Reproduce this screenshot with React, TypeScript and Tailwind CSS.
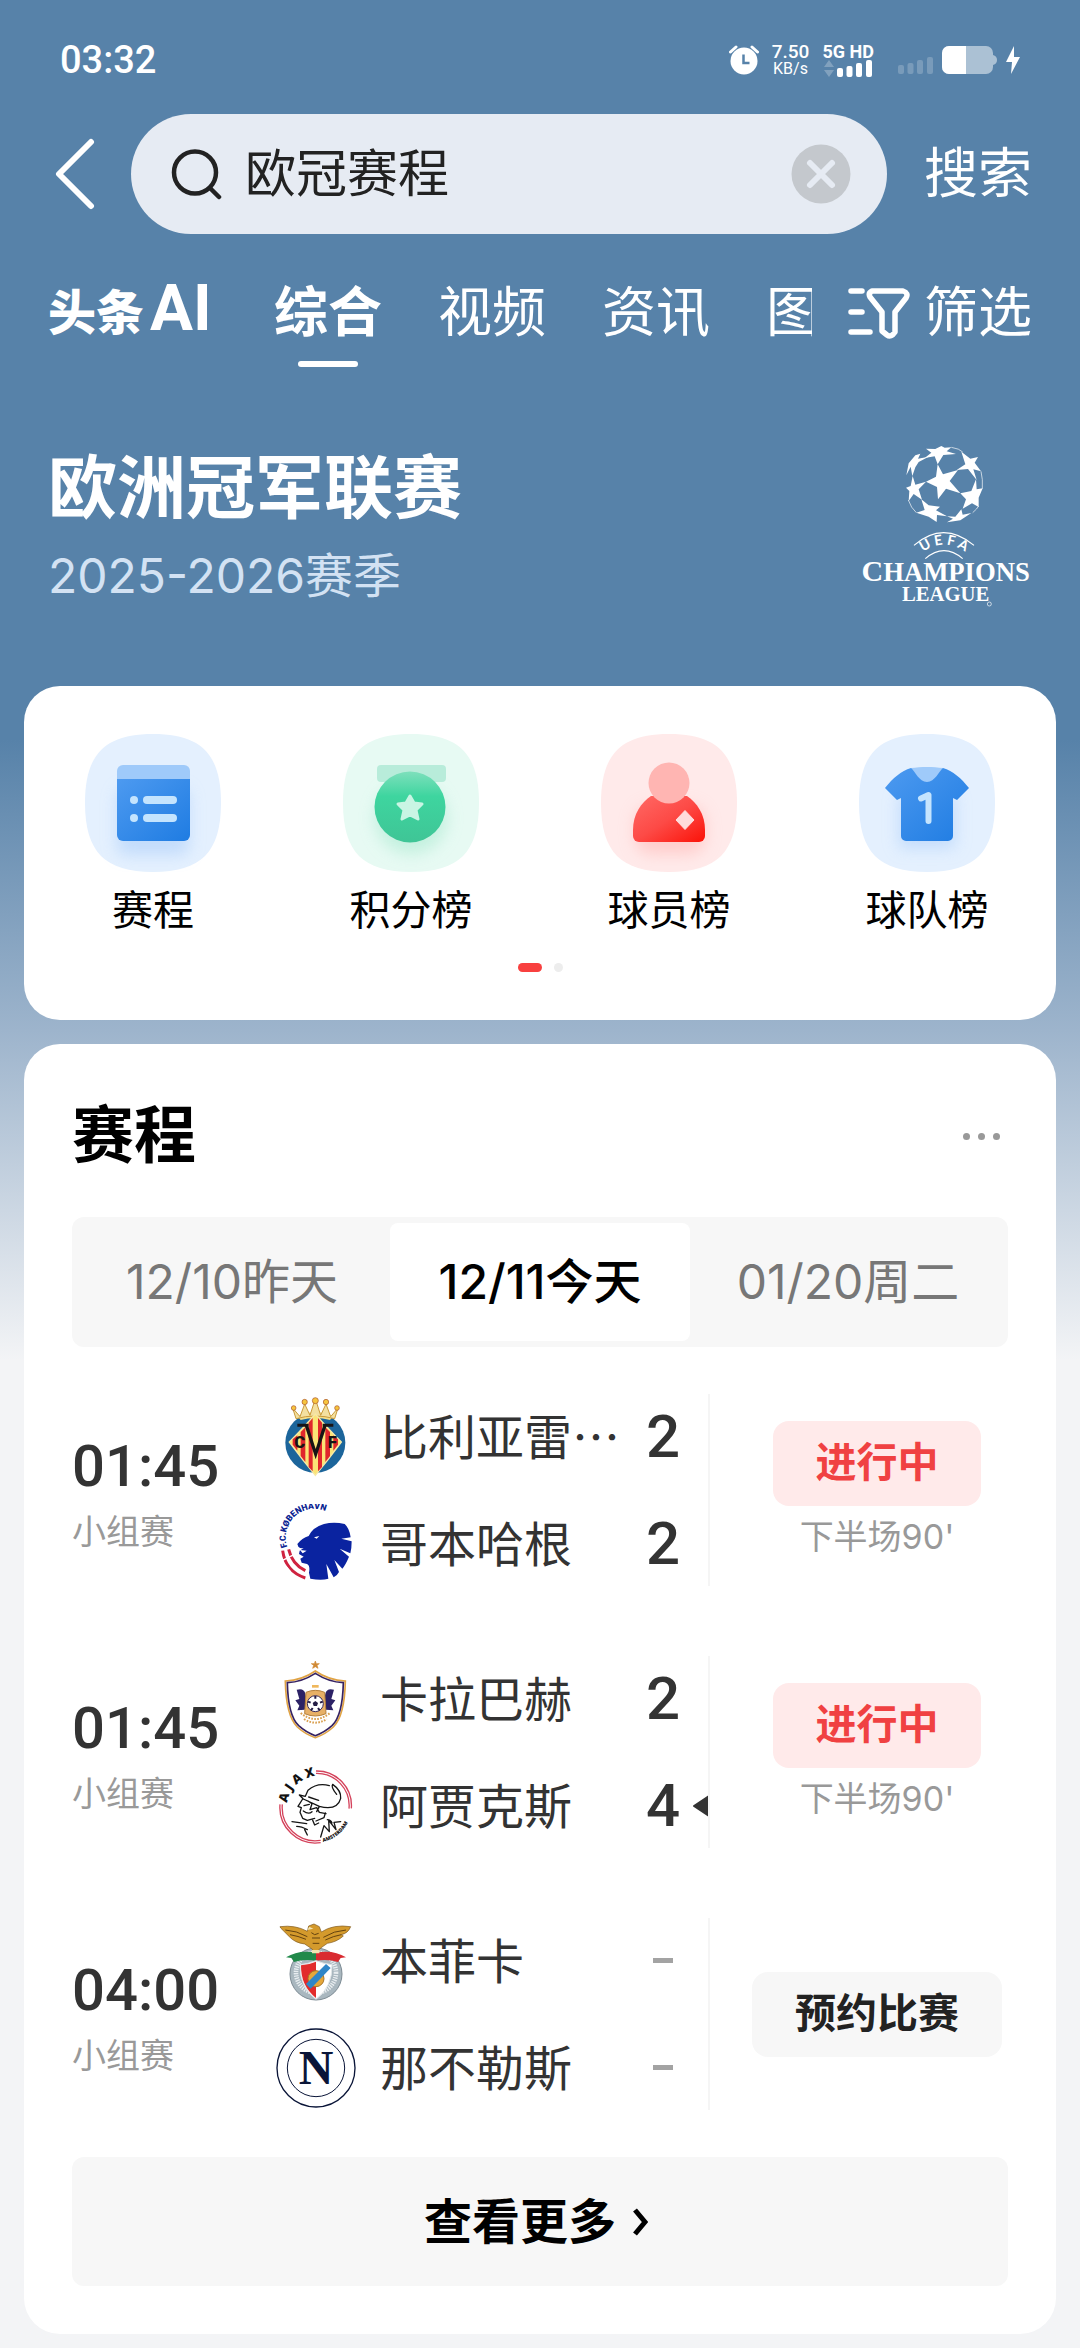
import { ReactNode, useState } from "react";

interface TeamType {
  name: string;
  crest: ReactNode;
  score?: number;
  winner?: boolean;
}

interface MatchType {
  id: number;
  time: string;
  stage: string;
  live?: string;
  teams: TeamType[];
}

const StatusBar = () => (
  <div className="flex items-center justify-between pt-9 pl-[60px] pr-[60px] text-white">
    <span className="font-['Roboto',sans-serif] text-[38px] leading-[48px] font-medium">03:32</span>
    <div className="flex h-12 items-center font-['Roboto',sans-serif]">
      <svg width="30" height="30" viewBox="0 0 30 30">
        <circle cx="15" cy="16" r="13.5" fill="#fff" />
        <path d="M1.5 7 7 2M28.5 7 23 2" stroke="#fff" strokeWidth="3" strokeLinecap="round" />
        <path d="M14.5 9.500v8.500h6" fill="none" stroke="#5782a9" strokeWidth="2.500" />
      </svg>
      <div className="ml-3 flex w-[40px] flex-col items-center">
        <span className="text-[19px] leading-[18px] font-medium">7.50</span>
        <span className="text-[16px] leading-[16px]">KB/s</span>
      </div>
      <div className="ml-3 flex flex-col items-center">
        <span className="text-[18px] leading-[17px] font-bold whitespace-nowrap">5G HD</span>
        <svg width="48" height="17" viewBox="0 0 48 17">
          <path d="M0 7 5 0l5 7zM0 10h10l-5 7z" fill="#fff" opacity=".25" />
          <g fill="#fff">
            <rect x="13" y="8" width="6" height="9" rx="2" />
            <rect x="22.500" y="6" width="6" height="11" rx="2" />
            <rect x="32" y="3" width="6" height="14" rx="2" />
            <rect x="42" y="0" width="6" height="17" rx="2" />
          </g>
        </svg>
      </div>
      <svg className="ml-6 self-end mb-1" width="36" height="25" viewBox="0 0 36 25">
        <g fill="#fff" opacity=".2">
          <rect x="0" y="10" width="6" height="9" rx="2" />
          <rect x="9.500" y="8" width="6" height="11" rx="2" />
          <rect x="19" y="5" width="6" height="14" rx="2" />
          <rect x="29" y="2" width="6" height="17" rx="2" />
        </g>
      </svg>
      <svg className="ml-2" width="78" height="28" viewBox="0 0 78 28">
        <rect x="0" y="0" width="51" height="28" rx="7" fill="#fff" opacity=".5" />
        <path d="M51 9q4 1 4 5t-4 5z" fill="#fff" opacity=".5" />
        <path d="M7 0h17v28H7a7 7 0 0 1-7-7V7a7 7 0 0 1 7-7z" fill="#fff" />
        <path d="M72 0 64 16h6l-1 12 9-17h-6z" fill="#fff" />
      </svg>
    </div>
  </div>
);

const LeagueLogo = () => (
  <svg width="172" height="166" viewBox="124 74 516 498" role="img" aria-label="UEFA Champions League">
    <g fill="#fff">
      <path d="M357 135 373 165 418 152 393 185 425 222 382 208 358 240 355 203 322 187 352 172z" />
      <path d="M322 88 350 89 368 80 378 85 398 84 384 96 412 104 374 107 357 135 348 111 318 116 338 100z" />
      <path d="M428 97 455 118 478 113 468 130 487 156 464 150 474 182 448 149 414 152 440 135z" />
      <path d="M472 180 474 210 492 207 480 235 480 263 460 252 432 268 442 240 425 222 458 215z" />
      <path d="M385 291 410 292 428 270 432 286 458 281 425 303 385 309 403 298z" />
      <path d="M308 240 330 258 364 262 352 273 385 291 355 287 354 308 330 292 293 280 318 272z" />
      <path d="M262 205 276 200 282 170 290 196 322 187 300 210 310 241 285 224 270 245 272 215z" />
      <path d="M263 168 270 132 290 108 305 103 298 118 330 112 300 128 290 144 281 170 276 142z" />
    </g>
    <g fill="none" stroke="#fff" strokeWidth="3.500">
      <path d="M286 378q88-76 180 0M320 418q56-48 112 0" />
      <path d="M398 84q25 4 34 14M487 156q6 24 4 52M462 280q14-12 18-20M293 280q-16-14-24-38" strokeWidth="2" />
    </g>
    <path id="uefaArc" d="M300 408q76-64 152 0" fill="none" />
    <text fill="#fff" fontFamily="Lato, sans-serif" fontWeight="700" fontSize="42">
      <textPath href="#uefaArc" startOffset="50%" textAnchor="middle">U E F A</textPath>
    </text>
    <g fill="#fff" fontFamily="'Liberation Serif', serif" fontWeight="700" textAnchor="middle">
      <text x="381" y="485"><tspan fontSize="90">C</tspan><tspan fontSize="80">HAMPIONS</tspan></text>
      <text x="381" y="546" fontSize="62">LEAGUE</text>
    </g>
    <circle cx="512" cy="554" r="6" fill="none" stroke="#fff" strokeWidth="2" />
  </svg>
);

const TileBg = ({ fill }: { fill: string }) => (
  <path d="M68 0c48 0 68 20 68 69s-20 69-68 69S0 118 0 69 20 0 68 0z" fill={fill} />
);

const ScheduleIcon = () => (
  <svg width="136" height="138" viewBox="0 0 136 138">
    <defs>
      <linearGradient id="blueFill" x1="0" y1="0" x2="1" y2="1">
        <stop offset="0" stopColor="#4d9af0" />
        <stop offset="1" stopColor="#1f7ce2" />
      </linearGradient>
      <filter id="soft" x="-50%" y="-50%" width="200%" height="200%"><feGaussianBlur stdDeviation="8" /></filter>
    </defs>
    <TileBg fill="#e4f0fe" />
    <rect x="32" y="55" width="72" height="66" rx="8" fill="#b5d4fb" opacity=".7" filter="url(#soft)" />
    <path d="M32 45h73v56a6 6 0 0 1-6 6H38a6 6 0 0 1-6-6z" fill="url(#blueFill)" />
    <path d="M38 31h61a6 6 0 0 1 6 6v8H32v-8a6 6 0 0 1 6-6z" fill="#9fcafa" />
    <g fill="#c4e4fe">
      <circle cx="49" cy="66" r="4" />
      <circle cx="49" cy="84" r="4" />
      <rect x="58" y="62" width="34" height="8" rx="4" />
      <rect x="58" y="80" width="34" height="8" rx="4" />
    </g>
  </svg>
);

const PointsIcon = () => (
  <svg width="136" height="138" viewBox="0 0 136 138">
    <defs>
      <linearGradient id="greenFill" x1="0" y1="0" x2="0" y2="1">
        <stop offset="0" stopColor="#7ee0bc" />
        <stop offset=".35" stopColor="#3ed59f" />
        <stop offset="1" stopColor="#3fc596" />
      </linearGradient>
    </defs>
    <TileBg fill="#e7faf3" />
    <circle cx="68" cy="84" r="36" fill="#b4ecd6" opacity=".7" filter="url(#soft)" />
    <rect x="34" y="31" width="69" height="17" rx="4" fill="#b8ecda" />
    <circle cx="67" cy="73" r="35.500" fill="url(#greenFill)" />
    <path d="M67 62l4 7 8 1-6 6 2 9-8-4-8 4 2-9-6-6 8-1z" fill="#c9f5e4" stroke="#c9f5e4" strokeWidth="3" strokeLinejoin="round" />
  </svg>
);

const PlayerIcon = () => (
  <svg width="136" height="138" viewBox="0 0 136 138">
    <defs>
      <linearGradient id="redFill" x1="0" y1="0" x2="1" y2="1">
        <stop offset="0" stopColor="#ff6a66" />
        <stop offset=".5" stopColor="#fd4a46" />
        <stop offset="1" stopColor="#fb1208" />
      </linearGradient>
    </defs>
    <TileBg fill="#ffeaea" />
    <rect x="34" y="72" width="70" height="48" rx="16" fill="#ffb9b7" opacity=".6" filter="url(#soft)" />
    <path d="M50 62h36c10 7 18 18 18 34v6a6 6 0 0 1-6 6H38a6 6 0 0 1-6-6v-6c0-16 8-27 18-34z" fill="url(#redFill)" />
    <circle cx="68" cy="49" r="20.500" fill="#ffb5b2" />
    <path d="M84 76.500 93 86l-9 9.500-9-9.500z" fill="#ffdcdc" stroke="#ffdcdc" strokeLinejoin="round" />
  </svg>
);

const TeamIcon = () => (
  <svg width="136" height="138" viewBox="0 0 136 138">
    <TileBg fill="#e4f0fe" />
    <path d="M40 60h56v54H40z" fill="#b5d4fb" opacity=".7" filter="url(#soft)" />
    <path d="M52 34h32c10 3 18 10 26 20L98 66l-4-2v38a5 5 0 0 1-5 5H47a5 5 0 0 1-5-5V64l-4 2-12-12c8-10 16-17 26-20z" fill="url(#blueFill)" />
    <path d="M52 34c10-1.500 22-1.500 32 0-4 3-8 14-16 14S56 37 52 34z" fill="#9fcafa" />
    <path d="M62 64.500 69.500 61v26" fill="none" stroke="#c4e4fe" strokeWidth="6" strokeLinecap="round" strokeLinejoin="round" />
  </svg>
);

const VillarrealCrest = () => (
  <svg width="80" height="80" viewBox="78 51 240 240">
    <circle cx="196" cy="188" r="90" fill="#1c659b" />
    <path d="M142 108q54-24 108 0l-10 12q-44-12-88 0z" fill="#f5de88" />
    <path d="M128 84l22 26 14-38 16 34 16-50 16 50 16-34 14 38 22-26-10 32q-58-16-116 0z" fill="#f3e0a0" stroke="#c99a3a" strokeWidth="3" />
    <g fill="#f6c53d" stroke="#a8522a" strokeWidth="2">
      <circle cx="131" cy="84" r="7" /><circle cx="164" cy="66" r="8" /><circle cx="196" cy="62" r="9" />
      <circle cx="228" cy="66" r="8" /><circle cx="261" cy="84" r="7" />
    </g>
    <path d="M196 102q34 40 78 84-40 54-78 100-38-46-78-100 44-44 78-84z" fill="#fbe476" stroke="#f7e9a5" strokeWidth="4" />
    <path d="M176 128 188 114v160l-12-13zM204 114l12 14v133l-12 13zM152 156l14-14v104l-14-18zM226 142l14 14v72l-14 18zM128 178l14-12v46l-14-18zM250 166l14 12v16l-14 18z" fill="#e0262c" />
    <path d="M142 131h34v10l21 66 21-66v-10h32v9h-21l-32 98-32-98h-23z" fill="#181415" />
    <g fill="#181415" fontFamily="Roboto, sans-serif" fontWeight="900" fontSize="50" textAnchor="middle">
      <text x="149" y="205">C</text>
      <text x="247" y="205">F</text>
    </g>
  </svg>
);

const CopenhagenCrest = () => (
  <svg width="80" height="80" viewBox="78 372 240 240">
    <path id="fckArc" d="M112 501a86 86 0 0 1 150-80" fill="none" />
    <text fill="#0a2391" fontFamily="Roboto, sans-serif" fontWeight="900" fontSize="26">
      <textPath href="#fckArc">F.C.KØBENHAVN</textPath>
    </text>
    <path d="M98 512q8 62 68 82M116 508q10 44 50 64" fill="none" stroke="#cf2340" strokeWidth="9" />
    <path d="M96 542l36-18M122 576l-18-22" stroke="#fff" strokeWidth="4" />
    <path d="M142 492q14-18 34-24 12-26 46-36 30-8 62 0 14 12 18 40l-28 4 31 8q0 22-4 36l-32-14 28 24q-10 24-20 36l-24-26 14 36q-6 12-16 16l-22-40 6 44q-20 6-54 0l-4-18q4-22-6-26l-16-4-4-12 10-6-14-8 2-10 12-8q-10 2-16-4z" fill="#0a23a0" />
    <path d="M192 472l16-4-8 8zM150 510l20 2-12 8z" fill="#fff" />
  </svg>
);

const QarabagCrest = () => (
  <svg width="80" height="80" viewBox="78 54 240 240">
    <path d="M196 60l3 8h9l-7 5 3 9-8-5-8 5 3-9-7-5h9z" fill="#d08a35" stroke="#d08a35" strokeWidth="2" />
    <path d="M196 90q40 28 90 30-2 104-36 138-24 22-54 32-30-10-54-32-34-34-36-138 50-2 90-30z" fill="#fff" stroke="#e0a344" strokeWidth="5" />
    <path d="M196 97q40 26 84 28-2 98-34 129-22 20-50 30-28-10-50-30-32-31-34-129 44-2 84-28z" fill="none" stroke="#352261" strokeWidth="5" />
    <path d="M140 146q22-6 26 12l6 28-8 20-22 2 6-14-12-16 12-4zM252 146q-22-6-26 12l-6 28 8 20 22 2-6-14 12-16-12-4z" fill="#2c2266" />
    <path d="M168 154q28-12 56 0l4 64q-32 14-64 0z" fill="#e7b066" stroke="#b5803c" strokeWidth="3" />
    <circle cx="196" cy="188" r="24" fill="#fff" stroke="#392b5d" strokeWidth="3" />
    <path d="M196 180l8 6-3 9h-10l-3-9z" fill="#241d44" />
    <path d="M196 165v8M174 182l8 3M218 182l-8 3M183 208l5-7M209 208l-5-7" stroke="#241d44" strokeWidth="6" />
    <path d="M186 132h20v8h-20z" fill="#efb75c" />
    <path d="M152 216q44 36 88 0M162 234q34 22 68 0" fill="none" stroke="#d9a050" strokeWidth="6" strokeDasharray="5 4" />
  </svg>
);

const AjaxCrest = () => (
  <svg width="80" height="80" viewBox="78 375 240 240">
    <g fill="none" stroke="#d4435c" strokeWidth="4">
      <path d="M198 390a104 104 0 0 1 106 112M198 397a97 97 0 0 1 99 106M90 490a107 107 0 0 0 122 115M97 490a100 100 0 0 0 115 108" />
    </g>
    <path id="ajaxArc" d="M111 486q12-66 86-82" fill="none" />
    <path id="amsArc" d="M219 603q62-14 84-82" fill="none" />
    <g fill="#111" fontFamily="'Open Sans', sans-serif" fontWeight="800">
      <text fontSize="38"><textPath href="#ajaxArc">A J A X</textPath></text>
      <text fontSize="15"><textPath href="#amsArc">AMSTERDAM</textPath></text>
    </g>
    <g fill="none" stroke="#151515" strokeWidth="4" strokeLinecap="round" strokeLinejoin="round">
      <path d="M148 462l18 4 8-18q28-24 64-14M148 462l12 12 48 22q54 14 64-24 2-24-24-42-6 8 12 30M158 474l-14 22 10 4-4 14 8 18 14 6 22-6M174 480l12 8-6 18 20-6 8 14 20 4M208 496l-8 16M160 510q16 12 26 2M162 494l16-4M198 540l24-10 4-14M188 538l6 14 12-6M126 542l44 6M164 566l8 16M140 556q14 0 32 10M212 588l10-34 16 18-2-34 22 28-6-22 20-2M232 536q10 0 14 10M176 468l30 10" />
    </g>
  </svg>
);

const BenficaCrest = () => (
  <svg width="80" height="80" viewBox="78 57 240 240">
    <circle cx="198" cy="216" r="78" fill="#a9b7bf" stroke="#7d8b94" strokeWidth="3" />
    <circle cx="198" cy="212" r="60" fill="none" stroke="#e8edf0" strokeWidth="14" strokeDasharray="4 3" />
    <path d="M108 166q38-24 90-14v24q-36-6-66 4l-8-12z" fill="#21894a" />
    <path d="M288 166q-38-24-90-14v24q36-6 66 4l8-12z" fill="#d92b31" />
    <path d="M150 188q24-2 48-12 24 10 48 12 2 66-48 104-50-38-48-104z" fill="#fff" stroke="#dfe5e8" strokeWidth="3" />
    <path d="M153 190q24-2 45-11v109q-46-36-45-98z" fill="#e22c2c" />
    <circle cx="198" cy="230" r="24" fill="#e5a73a" stroke="#a87528" strokeWidth="3" />
    <path d="M168 246l60-60 14 12-60 62z" fill="#2f86c8" />
    <path d="M90 74q46-6 82 14l4-16 16-6 16 8 6 16q36-24 88-16-8 20-28 24l6 4q-20 18-48 22l-20 14-14 14-16-14-18-12q-30-4-46-22l-26-26z" fill="#d49a2c" stroke="#7c5518" strokeWidth="2" />
    <path d="M106 84q34 2 66 20M120 98q24 4 48 14M288 84q-36 2-68 22M274 98q-24 4-48 16M184 92l10 6 12-4M186 108h24M188 124h20" fill="none" stroke="#63420f" strokeWidth="3" />
    <path d="M178 74l-6 10 18-4zM186 144h22v10h-22z" fill="#f2e4b0" />
  </svg>
);

const NapoliCrest = () => (
  <svg width="80" height="80" viewBox="78 380 240 240">
    <circle cx="198" cy="500" r="117" fill="#fff" stroke="#0a1538" strokeWidth="4" />
    <circle cx="198" cy="500" r="86" fill="none" stroke="#0a1538" strokeWidth="3" />
    <text x="198" y="547" fill="#0a1538" fontFamily="'Liberation Serif', serif" fontWeight="700" fontSize="144" textAnchor="middle">N</text>
  </svg>
);

const shortcuts = [
  { label: "赛程", icon: <ScheduleIcon /> },
  { label: "积分榜", icon: <PointsIcon /> },
  { label: "球员榜", icon: <PlayerIcon /> },
  { label: "球队榜", icon: <TeamIcon /> },
];

const days = ["12/10昨天", "12/11今天", "01/20周二"];

const matches: MatchType[] = [
  {
    id: 1, time: "01:45", stage: "小组赛", live: "下半场90'",
    teams: [
      { name: "比利亚雷…", crest: <VillarrealCrest />, score: 2 },
      { name: "哥本哈根", crest: <CopenhagenCrest />, score: 2 },
    ],
  },
  {
    id: 2, time: "01:45", stage: "小组赛", live: "下半场90'",
    teams: [
      { name: "卡拉巴赫", crest: <QarabagCrest />, score: 2 },
      { name: "阿贾克斯", crest: <AjaxCrest />, score: 4, winner: true },
    ],
  },
  {
    id: 3, time: "04:00", stage: "小组赛",
    teams: [
      { name: "本菲卡", crest: <BenficaCrest /> },
      { name: "那不勒斯", crest: <NapoliCrest /> },
    ],
  },
];

const TeamRow = ({ team }: { team: TeamType }) => (
  <div className="flex h-[107px] items-center">
    <span className="shrink-0">{team.crest}</span>
    <span className="ml-6 min-w-0 flex-1 whitespace-nowrap pb-1.5 font-['Noto_Sans_CJK_SC',sans-serif] text-[48px] leading-[72px] text-[#333]">{team.name}</span>
    <span className="flex w-[60px] justify-center font-['Roboto',sans-serif] text-[60px] leading-[72px] font-medium text-[#333]">
      {team.score ?? <i className="h-[5px] w-5 bg-[#a3a3a3]" />}
    </span>
    <span className="w-[17px] shrink-0">
      {team.winner && (
        <svg width="17" height="22" viewBox="0 0 17 22"><path d="M16 1v20L1 11z" fill="#333" stroke="#333" strokeWidth="2" strokeLinejoin="round" /></svg>
      )}
    </span>
  </div>
);

const MatchRow = ({ match }: { match: MatchType }) => (
  <li className="flex items-center">
    <div className="flex w-[204px] shrink-0 flex-col pt-3">
      <span className="font-['Roboto',sans-serif] text-[58px] leading-[72px] font-medium text-[#333]">{match.time}</span>
      <span className="text-[34px] leading-[60px] text-[#999]">{match.stage}</span>
    </div>
    <div className="min-w-0 flex-1">
      {match.teams.map((team) => <TeamRow key={team.name} team={team} />)}
    </div>
    <div className="-ml-0.5 h-48 w-0.5 bg-[#f5f5f5]"></div>
    <div className="ml-9 flex w-[262px] shrink-0 flex-col items-center gap-2">
      {match.live ? (
        <>
          <button className="h-[85px] w-52 rounded-2xl bg-[#ffeaea] text-[41px] font-bold text-[#f04142]">进行中</button>
          <span className="text-[34px] leading-[46px] text-[#999]">{match.live}</span>
        </>
      ) : (
        <button className="h-[85px] w-[250px] rounded-2xl bg-[#f7f7f7] text-[41px] font-bold text-[#222]">预约比赛</button>
      )}
    </div>
  </li>
);

export default function App() {
  const [keyword, setKeyword] = useState("欧冠赛程");
  const [day, setDay] = useState(1);

  return (
    <div lang="zh-CN" className="min-h-screen bg-[#f3f4f6] bg-[linear-gradient(180deg,#5782a9_0,#5782a9_740px,#9db4cc_1030px,#f3f4f6_1360px)] font-['Inter','Noto_Sans_CJK_SC',sans-serif]">
      <StatusBar />

      <form className="mt-[30px] flex items-center pl-[54px] pr-12" onSubmit={(e) => e.preventDefault()}>
        <button type="button" aria-label="返回" className="mr-[35px]">
          <svg width="42" height="72" viewBox="0 0 42 72"><path d="M37 4 5 36l32 32" fill="none" stroke="#fff" strokeWidth="6" strokeLinecap="round" strokeLinejoin="round" /></svg>
        </button>
        <div className="flex h-[120px] min-w-0 flex-1 items-center rounded-full bg-[#e6ebf3] pr-9 pl-10">
          <svg className="shrink-0" width="52" height="52" viewBox="0 0 52 52"><g fill="none" stroke="#222" strokeWidth="4.500" strokeLinecap="round"><circle cx="24" cy="24.500" r="21" /><path d="m39 40 9 9" /></g></svg>
          <input aria-label="搜索关键词" className="ml-[22px] min-w-0 flex-1 bg-transparent text-[51px] leading-[80px] text-[#222] outline-none" value={keyword} onChange={(e) => setKeyword(e.target.value)} />
          <button type="button" aria-label="清空" onClick={() => setKeyword("")}>
            <svg width="60" height="60" viewBox="0 0 60 60"><circle cx="30" cy="30" r="29.500" fill="#c4c8cd" /><path d="m19 19 22 22m0-22L19 41" stroke="#e6ebf3" strokeWidth="6" strokeLinecap="round" /></svg>
          </button>
        </div>
        <button type="submit" className="ml-[37px] text-[54px] leading-[72px] text-white">搜索</button>
      </form>

      <nav className="mt-[37px] flex h-[100px] items-start pr-12 pl-12 text-[54px] leading-[84px] text-white">
        <div className="flex min-w-0 flex-1 overflow-hidden whitespace-nowrap">
          <a href="#ai" className="mr-[66px] flex w-40 shrink-0 items-baseline gap-1.5 leading-[76px] font-black"><span className="text-[48px]">头条</span><span className="font-['Roboto',sans-serif] text-[64px] font-bold">AI</span></a>
          <a href="#all" className="mr-14 flex shrink-0 flex-col items-center font-bold">综合<i className="mt-1.5 h-[6px] w-[60px] rounded-full bg-white"></i></a>
          <a href="#video" className="mr-14 shrink-0">视频</a>
          <a href="#news" className="mr-14 shrink-0">资讯</a>
          <a href="#image" className="shrink-0">图</a>
        </div>
        <button className="ml-9 flex shrink-0 items-center gap-3.5">
          <svg width="62" height="52" viewBox="0 0 62 52"><g fill="none" stroke="#fff" strokeWidth="5.500" strokeLinecap="round" strokeLinejoin="round"><path d="M3 4h11M3 25h11M3 45h19M24 4h31q6 2 3 7L47 25v20q-4 6-8 3l-5-4V25L22 10q-2-4 2-6z" /></g></svg>
          筛选
        </button>
      </nav>

      <header className="mt-[73px] flex items-start justify-between pr-12 pl-12 text-white">
        <div>
          <h1 className="text-[69px] leading-[88px] font-bold">欧洲冠军联赛</h1>
          <p className="mt-2 text-[48px] leading-[72px] text-[#d3e2f3]">2025-2026赛季</p>
        </div>
        <LeagueLogo />
      </header>

      <main className="flex flex-col gap-6 px-6 pt-[74px] pb-3.5">
        <section className="rounded-[36px] bg-white pt-12 pb-12">
          <div className="grid grid-cols-4">
            {shortcuts.map((item) => (
              <a key={item.label} href="#" className="flex flex-col items-center gap-2 text-[41px] leading-[60px] text-black">
                {item.icon}
                {item.label}
              </a>
            ))}
          </div>
          <div className="mt-[23px] flex justify-center gap-3">
            <i className="h-[9px] w-6 rounded-full bg-[#f8403f]"></i>
            <i className="h-[9px] w-[9px] rounded-full bg-[#ededed]"></i>
          </div>
        </section>

        <section className="rounded-[36px] bg-white px-12 pt-12 pb-12">
          <div className="flex items-center justify-between pr-2">
            <h2 className="text-[62px] leading-[88px] font-bold text-black">赛程</h2>
            <button aria-label="更多选项" className="flex gap-2">
              <i className="h-[7px] w-[7px] rounded-full bg-[#999]"></i>
              <i className="h-[7px] w-[7px] rounded-full bg-[#999]"></i>
              <i className="h-[7px] w-[7px] rounded-full bg-[#999]"></i>
            </button>
          </div>

          <div className="mt-[37px] flex gap-2 rounded-xl bg-[#f7f7f7] px-2.5 py-1.5">
            {days.map((label, i) => (
              <button key={label} onClick={() => setDay(i)} className={`h-[118px] flex-1 rounded-lg text-[48px] ${i === day ? "bg-white font-medium text-black" : "text-[#777]"}`}>
                {label}
              </button>
            ))}
          </div>

          <ul className="mt-9 flex flex-col gap-12">
            {matches.map((match) => <MatchRow key={match.id} match={match} />)}
          </ul>

          <button className="mt-9 flex h-[129px] w-full items-center justify-center gap-4 rounded-xl bg-[#f7f7f7] pr-2 text-[48px] font-bold text-black">
            查看更多
            <svg width="16" height="30" viewBox="0 0 16 30"><path d="m3 3 10 12L3 27" fill="none" stroke="#000" strokeWidth="5" /></svg>
          </button>
        </section>
      </main>
    </div>
  );
}
